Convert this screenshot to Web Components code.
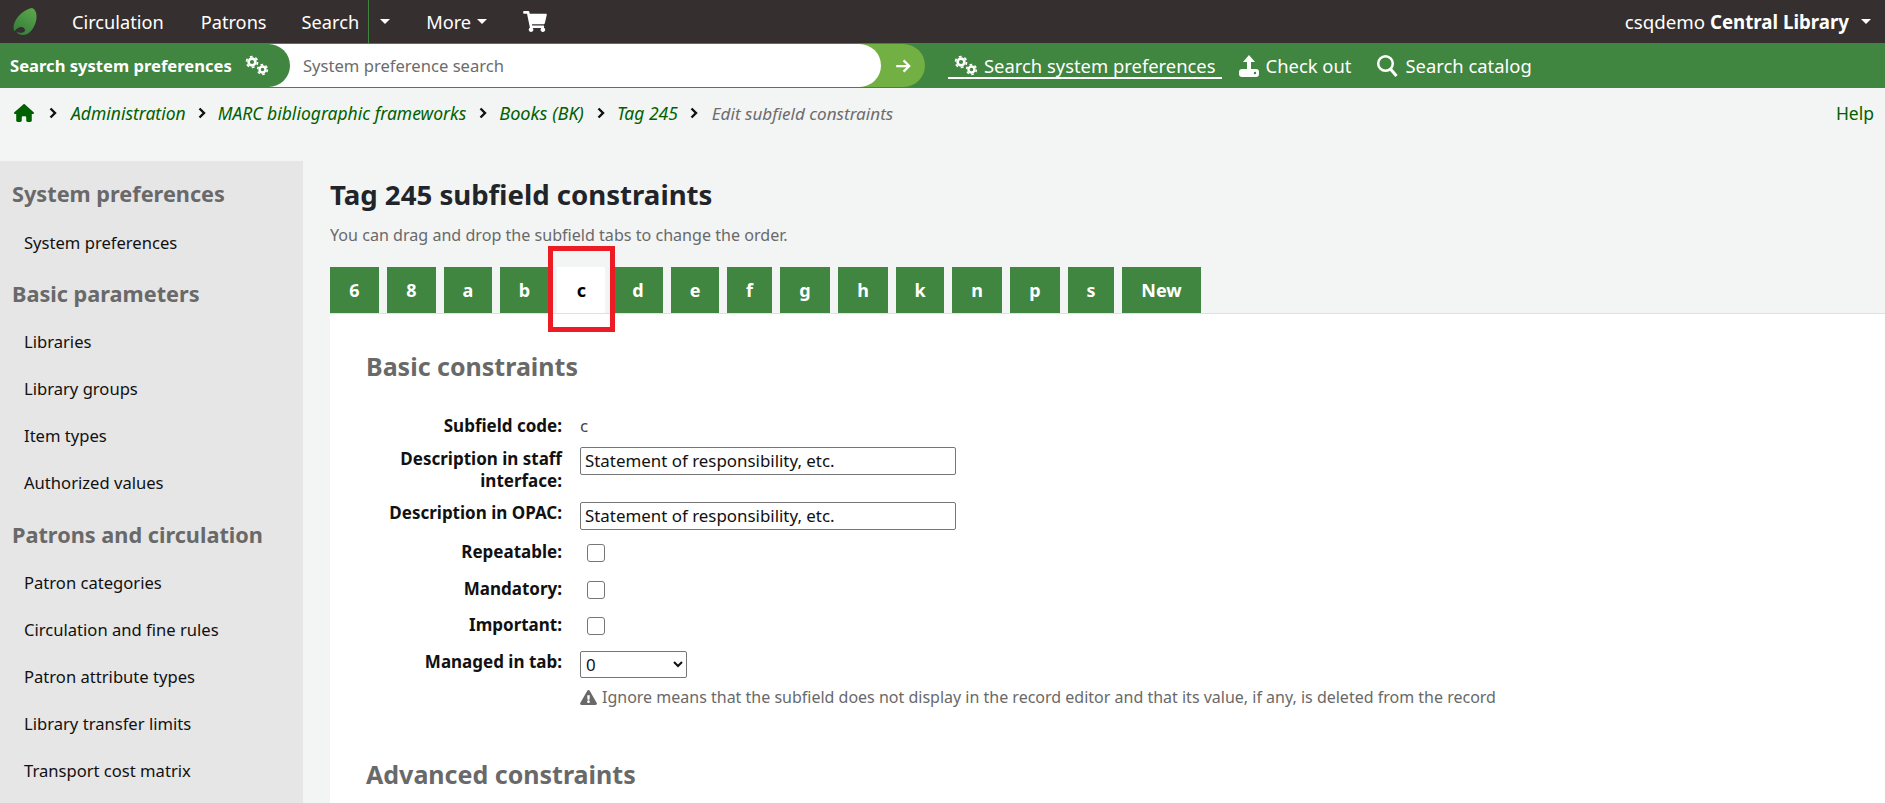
<!DOCTYPE html>
<html lang="en">
<head>
<meta charset="utf-8">
<title>Tag 245 subfield constraints</title>
<style>
html, body { margin: 0; height: 100%; overflow: hidden; }
body { background: #f3f4f4; font-family: "Noto Sans", "Open Sans", sans-serif; font-size: 17px; color: #212529; display: flex; flex-direction: column; }
</style>
</head>
<body>
<koha-topbar></koha-topbar>
<koha-searchbar></koha-searchbar>
<koha-breadcrumb></koha-breadcrumb>
<div style="display:flex;flex:1;min-height:0;padding-top:23px;gap:27px">
    <koha-sidebar></koha-sidebar>
    <koha-main style="flex:1;min-width:0"></koha-main>
</div>

<script>
// ── Icons ──────────────────────────────────────────
const ICONS = {
    cart: ['0 0 576 512', 'M528.12 301.319l47.273-208C578.806 78.301 567.391 64 551.99 64H159.208l-9.166-44.81C147.758 8.021 137.93 0 126.529 0H24C10.745 0 0 10.745 0 24v16c0 13.255 10.745 24 24 24h69.883l70.248 343.435C147.325 417.1 136 435.222 136 456c0 30.928 25.072 56 56 56s56-25.072 56-56c0-15.674-6.447-29.835-16.824-40h209.647C430.447 426.165 424 440.326 424 456c0 30.928 25.072 56 56 56s56-25.072 56-56c0-22.172-12.888-41.332-31.579-50.405l5.517-24.276c3.413-15.018-8.002-29.319-23.403-29.319H218.117l-6.545-32h293.145c11.206 0 20.92-7.754 23.403-18.681z'],
    home: ['0 0 576 512', 'M575.8 255.5c0 18-15 32.1-32 32.1h-32l.7 160.2c0 2.7-.2 5.4-.5 8.1V472c0 22.1-17.9 40-40 40H456c-1.1 0-2.2 0-3.3-.1c-1.4 .1-2.8 .1-4.2 .1H416 392c-22.1 0-40-17.9-40-40V448 384c0-17.7-14.3-32-32-32H256c-17.7 0-32 14.3-32 32v64 24c0 22.1-17.9 40-40 40H160 128.1c-1.5 0-3-.1-4.500-.2c-1.2 .1-2.4 .2-3.600 .2H104c-22.1 0-40-17.9-40-40V360c0-.9 0-1.9 .1-2.800V287.600H32c-18 0-32-14-32-32.100c0-9 3-17 10-24L266.400 8c7-7 15-8 22-8s15 2 21 7L564.800 231.500c8 7 12 15 11 24z'],
    warn: ['0 0 576 512', 'M569.517 440.013C587.975 472.007 564.806 512 527.94 512H48.054c-36.937 0-59.999-40.055-41.577-71.987L246.423 24.035c18.467-32.009 64.72-31.951 83.154 0l239.94 416.028zM288 354c-25.405 0-46 20.595-46 46s20.595 46 46 46 46-20.595 46-46-20.595-46-46-46zm-43.673-165.346l7.418 136c.347 6.364 5.609 11.346 11.982 11.346h48.546c6.373 0 11.635-4.982 11.982-11.346l7.418-136c.375-6.874-5.098-12.654-11.982-12.654h-63.383c-6.884 0-12.356 5.78-11.981 12.654z']
};
const icon = (name, w, h) => `<svg width="${w}" height="${h}" viewBox="${ICONS[name][0]}" fill="currentColor" style="display:block;flex:none"><path d="${ICONS[name][1]}"/></svg>`;
const GEARS = `<svg width="24" height="21" viewBox="0 0 24 21" fill="none" stroke="currentColor" style="display:block;flex:none">
    <circle cx="7" cy="7" r="3.400" stroke-width="2.600"/><circle cx="7" cy="7" r="5.500" stroke-width="1.700" stroke-dasharray="2.900 2.860"/>
    <circle cx="17.500" cy="14.500" r="3" stroke-width="2.400"/><circle cx="17.500" cy="14.500" r="4.900" stroke-width="1.600" stroke-dasharray="2.600 2.530"/>
</svg>`;
const CARET = `<span style="display:inline-block;border:5px solid transparent;border-top-color:currentColor;border-bottom:0"></span>`;
const CHEVRON = `<svg width="8" height="12" viewBox="0 0 8 12" fill="none" stroke="#111" stroke-width="2.4" style="display:block;flex:none"><path d="M1.500 1.500L6 6l-4.500 4.500"/></svg>`;

class KohaTopbar extends HTMLElement {
    connectedCallback() {
        this.attachShadow({ mode: 'open' }).innerHTML = `
<style>
:host { display: flex; align-items: center; height: 43px; background: #362f30; color: #fff; font-size: 18.200px; flex: none; }
a { display: flex; align-items: center; gap: 6px; }
.logo { margin-left: 13px; margin-right: 35px; display: block; }
.split { align-self: stretch; border-left: 1px solid #408540; margin-left: 9px; padding: 0 36px 0 11px; display: flex; align-items: center; }
.user { margin-left: auto; margin-right: 14px; gap: 12px; font-size: 18.700px; }
</style>
<svg class="logo" width="24" height="27" viewBox="0 0 24 27">
    <defs><linearGradient id="g" x1="0.8" y1="0" x2="0.2" y2="1"><stop offset="0" stop-color="#5aa64a"/><stop offset="1" stop-color="#347c3c"/></linearGradient></defs>
    <path fill="url(#g)" d="M19 0C23 1.500 24.500 7 23 13 21 21 16 27 10 27 6.500 27 4 25.500 3.500 23.500 5.500 25 9.500 25.500 11.500 23.500 13 21.500 11 19 8.500 19 5 19 2.500 21.500 1.500 23.500 0 21 .2 17 2.500 12.500 6 6 13 1 19 0z"/>
</svg>
<a style="margin-right:37px">Circulation</a>
<a style="margin-right:35px">Patrons</a>
<a>Search</a>
<span class="split">${CARET}</span>
<a>More ${CARET}</a>
<a style="margin-left:36px">${icon('cart', 24, 21)}</a>
<a class="user"><span>csqdemo <b>Central Library</b></span> ${CARET}</a>`;
    }
}
customElements.define('koha-topbar', KohaTopbar);

class KohaSearchbar extends HTMLElement {
    connectedCallback() {
        this.attachShadow({ mode: 'open' }).innerHTML = `
<style>
:host { display: flex; align-items: stretch; height: 45px; background: #408540; color: #fff; flex: none; box-sizing: border-box; padding: 1px 0 1px; font-size: 18.400px; }
.label { display: flex; align-items: center; gap: 13px; width: 290px; box-sizing: border-box; padding-left: 10px; font-weight: 700; font-size: 16.600px; background: #408540; border-radius: 0 22px 22px 0; position: relative; z-index: 2; margin-right: -22px; }
.input { width: 613px; box-sizing: border-box; background: #fff; border-radius: 0 22px 22px 0; padding-left: 35px; display: flex; align-items: center; color: #6c6c6c; font-size: 16.600px; position: relative; z-index: 1; margin-right: -22px; }
.go { width: 66px; box-sizing: border-box; padding-left: 22px; background: #72b043; border-radius: 0 22px 22px 0; display: flex; align-items: center; justify-content: center; }
nav { display: flex; align-items: center; margin-left: 23px; gap: 15px; }
a { display: flex; align-items: center; gap: 6px; }
a.on { position: relative; padding: 0 6px; margin-right: 1px; align-self: stretch; }
a.on::after { content: ""; position: absolute; left: 0; right: 0; bottom: 8px; border-bottom: 2px solid #fff; }
</style>
<div class="label">Search system preferences ${GEARS}</div>
<div class="input">System preference search</div>
<div class="go"><svg width="18" height="18" viewBox="0 0 16 16" fill="none" stroke="#fff" stroke-width="2"><path d="M2 8h11M8.500 3l5 5-5 5"/></svg></div>
<nav>
    <a class="on">${GEARS} Search system preferences</a>
    <a><svg width="22" height="24" viewBox="0 0 22 24" fill="currentColor" style="display:block"><path d="M11 1l6 7h-4v8H9V8H5z"/><rect x="1" y="15" width="20" height="8" rx="3"/><circle cx="17" cy="19" r="1.200" fill="#408540"/></svg> Check out</a>
    <a style="margin-left:10px;gap:7px"><svg width="22" height="23" viewBox="0 0 22 23" fill="none" stroke="currentColor" style="display:block"><circle cx="9.500" cy="9.500" r="7.300" stroke-width="2.500"/><path d="M14.500 15l6 7" stroke-width="3"/></svg> Search catalog</a>
</nav>`;
    }
}
customElements.define('koha-searchbar', KohaSearchbar);

class KohaBreadcrumb extends HTMLElement {
    connectedCallback() {
        this.attachShadow({ mode: 'open' }).innerHTML = `
<style>
:host { display: flex; align-items: center; gap: 12px; height: 50px; padding: 0 11px 0 14px; box-sizing: border-box; font-size: 17.500px; font-style: italic; color: #006100; flex: none; }
.last { color: #6c6c6c; font-size: 17.100px; margin-left: 2px; }
.help { margin-left: auto; font-style: normal; }
</style>
<span style="margin-right:3px;color:#006100">${icon('home', 20, 18)}</span>${CHEVRON}
<span style="margin-left:2px">Administration</span>${CHEVRON}
<span style="margin-right:1px">MARC bibliographic frameworks</span>${CHEVRON}
<span style="font-size:18.200px;margin-right:1px">Books (BK)</span>${CHEVRON}
<span>Tag 245</span>${CHEVRON}
<span class="last">Edit subfield constraints</span>
<span class="help">Help</span>`;
    }
}
customElements.define('koha-breadcrumb', KohaBreadcrumb);

class KohaSidebar extends HTMLElement {
    connectedCallback() {
        const groups = [
            ['System preferences', ['System preferences']],
            ['Basic parameters', ['Libraries', 'Library groups', 'Item types', 'Authorized values']],
            ['Patrons and circulation', ['Patron categories', 'Circulation and fine rules', 'Patron attribute types', 'Library transfer limits', 'Transport cost matrix']]
        ];
        this.attachShadow({ mode: 'open' }).innerHTML = `
<style>
:host { display: block; width: 303px; flex: none; background: #e6e6e6; overflow: hidden; box-sizing: border-box; padding: 17px 12px 0; }
h5 { margin: 0; font-size: 21.700px; line-height: 32px; font-weight: 700; color: #696969; }
ul { list-style: none; margin: 0 0 11.500px; padding: 9.500px 0 0 12px; }
li { font-size: 16.600px; line-height: 46.900px; color: #111; }
</style>
${groups.map(([t, items]) => `<h5>${t}</h5><ul>${items.map(i => `<li>${i}</li>`).join('')}</ul>`).join('')}`;
    }
}
customElements.define('koha-sidebar', KohaSidebar);

// a label + value row of the constraints form
class KohaRow extends HTMLElement {
    connectedCallback() {
        this.attachShadow({ mode: 'open' }).innerHTML = `
<style>
:host { display: grid; grid-template-columns: 196px 1fr; column-gap: 18px; height: var(--h); align-items: start; line-height: 22px; }
.l { font-weight: 700; text-align: right; color: #111; font-size: 17px; padding-top: var(--lp, 0); }
</style>
<div class="l"><slot name="label"></slot></div><div><slot></slot></div>`;
    }
}
customElements.define('koha-row', KohaRow);

class KohaMain extends HTMLElement {
    connectedCallback() {
        const tabs = [['6', 49], ['8', 49], ['a', 48], ['b', 49], ['c', 48], ['d', 50], ['e', 48], ['f', 45], ['g', 50], ['h', 50], ['k', 48], ['n', 50], ['p', 50], ['s', 46], ['New', 79]];
        this.attachShadow({ mode: 'open' }).innerHTML = `
<style>
:host { display: flex; flex-direction: column; min-height: 0; overflow: hidden; }
h1 { margin: 0; font-size: 27.600px; line-height: 36px; font-weight: 700; color: #212529; padding-top: 15px; }
.hint { margin: 12px 0 21px; color: #696969; line-height: 22px; font-size: 16.100px; }
.tabs { display: flex; gap: 8px; position: relative; border-bottom: 1px solid #e0e0e0; margin-bottom: -1px; flex: none; }
.tab { height: 46px; display: flex; align-items: center; justify-content: center; background: #408540; color: #fff; font-weight: 700; font-size: 18px; }
.tab.on { background: #fff; color: #000; position: relative; padding-left: 1px; box-sizing: border-box; }
.mark { position: absolute; left: -9px; top: -21px; width: 67px; height: 86px; box-sizing: border-box; border: 5px solid #ed1c24; }
.panel { background: #fff; padding: 35px 36px 0; flex: 1; min-height: 0; }
h2 { margin: 0; font-size: 25px; line-height: 36px; font-weight: 700; color: #696969; }
form { display: block; margin-top: 31px; font-size: 16.900px; }
input[type=text] { display: block; box-sizing: border-box; width: 376px; height: 28px; border: 1px solid #767676; border-radius: 2px; padding: 0 4px 2px; margin: 0; font: inherit; color: #111; background: #fff; }
.v { color: #444; }
.check { display: block; box-sizing: border-box; width: 18px; height: 18px; margin: 3px 0 0 7px; border: 1px solid #767676; border-radius: 3px; background: #fff; }
select { display: block; width: 107px; height: 27px; font: inherit; border: 1px solid #767676; border-radius: 2px; background: #fff; color: #111; padding: 0 0 0 1px; margin: 0; }
small { display: flex; align-items: center; gap: 5px; color: #696969; font-size: 16px; white-space: nowrap; }
h2.adv { margin-top: 48px; }
</style>
<h1>Tag 245 subfield constraints</h1>
<p class="hint">You can drag and drop the subfield tabs to change the order.</p>
<div class="tabs">${tabs.map(([t, w]) => t === 'c'
            ? `<div class="tab on" style="width:${w}px">${t}<span class="mark"></span></div>`
            : `<div class="tab" style="width:${w}px">${t}</div>`).join('')}</div>
<div class="panel">
    <h2>Basic constraints</h2>
    <form onsubmit="return false">
        <koha-row style="--h:32px"><span slot="label">Subfield code:</span><span class="v">c</span></koha-row>
        <koha-row style="--h:55px;--lp:1px"><span slot="label">Description in staff interface:</span><input type="text" value="Statement of responsibility, etc."></koha-row>
        <koha-row style="--h:39px"><span slot="label">Description in OPAC:</span><input type="text" value="Statement of responsibility, etc."></koha-row>
        <koha-row style="--h:37px"><span slot="label">Repeatable:</span><span class="check"></span></koha-row>
        <koha-row style="--h:36px"><span slot="label">Mandatory:</span><span class="check"></span></koha-row>
        <koha-row style="--h:37px"><span slot="label">Important:</span><span class="check"></span></koha-row>
        <koha-row style="--h:35px"><span slot="label">Managed in tab:</span><select><option>0</option></select></koha-row>
        <koha-row style="--h:22px"><span slot="label"></span><small>${icon('warn', 17, 15)} Ignore means that the subfield does not display in the record editor and that its value, if any, is deleted from the record</small></koha-row>
    </form>
    <h2 class="adv">Advanced constraints</h2>
</div>`;
    }
}
customElements.define('koha-main', KohaMain);
</script>
</body>
</html>
